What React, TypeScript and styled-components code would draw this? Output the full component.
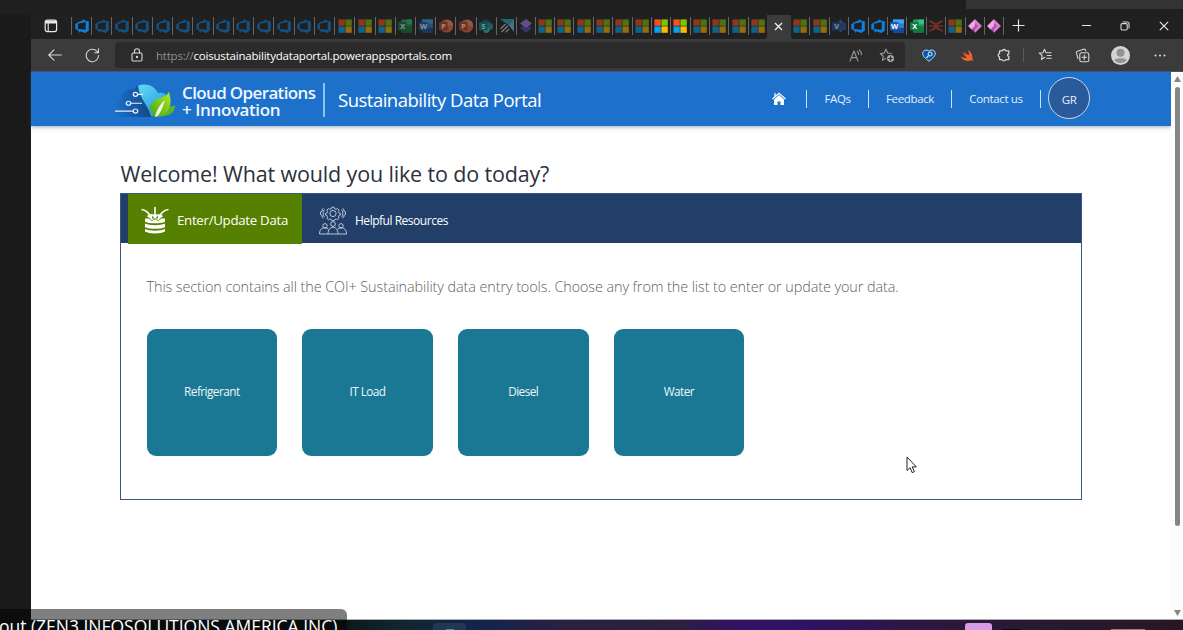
import React from "react";
import styled, { createGlobalStyle, css } from "styled-components";

const Global = createGlobalStyle`
  * { box-sizing: border-box; }
  body { margin: 0; background: #1a1a1a; overflow: hidden; }
  svg { display: block; flex: none; }
`;

const sans = `"Open Sans", "Noto Sans", sans-serif`;

const Screen = styled.div`
  position: relative;
  width: 1183px;
  height: 630px;
  overflow: hidden;
  display: flex;
  flex-direction: column;
  background: #1a1a1a;
  font-family: ${sans};
`;
const TopStrip = styled.div`
  height: 15px;
  flex: none;
  display: flex;
  justify-content: flex-end;
  background: #1f1f1f;
`;
const StripPanel = styled.div`
  width: 217px;
  height: 9px;
  background: #333333;
`;
const Middle = styled.div`
  height: 605px;
  flex: none;
  display: flex;
`;
const SideGutter = styled.div`
  width: 31px;
  flex: none;
  background: #1a1a1a;
`;
const Browser = styled.div`
  flex: 1;
  min-width: 0;
  display: flex;
  flex-direction: column;
`;

const TabBar = styled.div`
  height: 24px;
  flex: none;
  display: flex;
  background: #3b3b3b;
`;
const TabGroup = styled.div<{ $grow?: boolean; $w?: number }>`
  display: flex;
  background: #202020;
  ${(p) => (p.$grow ? "flex: 1;" : `width: ${p.$w}px; flex: none;`)}
  border-radius: ${(p) => (p.$grow ? "0 0 0 3px" : "0 0 3px 0")};
`;
const TabMenu = styled.div`
  width: 40px;
  flex: none;
  display: flex;
  align-items: center;
  justify-content: center;
  padding-bottom: 2px;
`;
const Tab = styled.div<{ $w: number; $side: "left" | "right" }>`
  width: ${(p) => p.$w}px;
  flex: none;
  height: 18px;
  margin-top: 2px;
  display: flex;
  align-items: center;
  justify-content: center;
  border-${(p) => p.$side}: 1px solid #666;
`;
const Dim = styled.div<{ $on?: boolean }>`
  opacity: ${(p) => (p.$on ? 1 : 0.5)};
`;
const ActiveTab = styled.div`
  width: 24px;
  flex: none;
  display: flex;
  align-items: center;
  justify-content: center;
  padding-right: 2px;
  padding-bottom: 2px;
`;
const NewTab = styled.div`
  width: 29px;
  display: flex;
  align-items: center;
  justify-content: center;
  padding-bottom: 3px;
`;
const WindowButtons = styled.div`
  margin-left: auto;
  display: flex;
  padding-bottom: 3px;
`;
const WindowButton = styled.div`
  width: 38.8px;
  display: flex;
  align-items: center;
  justify-content: center;
`;

const Toolbar = styled.div`
  height: 33px;
  flex: none;
  display: flex;
  align-items: center;
  background: #3b3b3b;
  border-bottom: 1px solid #48566a;
`;
const ToolCell = styled.div<{ $w: number }>`
  width: ${(p) => p.$w}px;
  flex: none;
  display: flex;
  align-items: center;
  justify-content: center;
`;
const AddressBar = styled.div`
  width: 790px;
  height: 26px;
  flex: none;
  display: flex;
  align-items: center;
  background: #2b2b2b;
  border-radius: 3px;
`;
const Url = styled.div`
  flex: 1;
  color: #8f8f8f;
  font-size: 11.5px;
  letter-spacing: -0.21px;
  white-space: nowrap;
  b { color: #fff; font-weight: 400; }
`;
const ToolDivider = styled.div`
  width: 1px;
  height: 14px;
  background: #5c5c5c;
`;

const Viewport = styled.div`
  flex: 1;
  min-height: 0;
  display: flex;
  background: #fff;
  border-bottom: 1px solid #a9adb0;
`;
const Page = styled.div`
  width: 1140px;
  flex: none;
`;
const Scrollbar = styled.div`
  flex: 1;
  display: flex;
  flex-direction: column;
  align-items: center;
  justify-content: space-between;
  padding: 4px 0 3px 1px;
  background: #fcfcfc;
`;
const Thumb = styled.div`
  width: 5px;
  height: 439px;
  margin: 5px 0 auto;
  border-radius: 3px;
  background: #858585;
`;

const Header = styled.header`
  height: 54px;
  display: flex;
  align-items: center;
  padding: 0 81px 0 84px;
  background: #1d71cb;
  box-shadow: 0 1px 4px rgba(40, 80, 130, 0.5);
`;
const Brand = styled.div`
  width: 141px;
  margin-left: 7px;
  color: #eef6ff;
  font-size: 17px;
  font-weight: 600;
  line-height: 17px;
  letter-spacing: -0.64px;
  white-space: nowrap;
  padding-top: 4px;
`;
const BrandLine = styled.div<{ $ls?: number }>`
  height: 17px;
  letter-spacing: ${(p) => p.$ls ?? -0.64}px;
`;
const BrandRule = styled.div`
  width: 2px;
  height: 34px;
  margin: 2px 13px 0 0;
  background: #8fc0ef;
`;
const PortalTitle = styled.div`
  color: #fff;
  font-size: 18.5px;
  letter-spacing: -0.5px;
  white-space: nowrap;
`;
const Nav = styled.nav`
  margin-left: auto;
  display: flex;
  align-items: center;
`;
const NavItem = styled.div<{ $w: number }>`
  width: ${(p) => p.$w}px;
  display: flex;
  justify-content: center;
  color: #e4effb;
  font-size: 11.5px;
  letter-spacing: -0.35px;
  white-space: nowrap;
  padding-bottom: 1px;
`;
const NavRule = styled.div`
  width: 1px;
  height: 18px;
  margin-bottom: 1px;
  background: #cfe2f6;
`;
const Avatar = styled.div`
  width: 42px;
  height: 42px;
  margin-left: 7px;
  margin-bottom: 2px;
  border: 1px solid #c6d8f0;
  border-radius: 50%;
  background: #2b5a9b;
  color: #e8effa;
  font-size: 11.5px;
  letter-spacing: -0.5px;
  display: flex;
  align-items: center;
  justify-content: center;
  padding-top: 3px;
`;

const Content = styled.main`
  padding: 32px 0 0 89px;
`;
const Welcome = styled.h1`
  margin: 0;
  height: 35px;
  line-height: 31px;
  color: #2b323c;
  font-size: 21.5px;
  font-weight: 400;
  letter-spacing: -0.15px;
  white-space: nowrap;
  padding-left: 0.5px;
`;
const Panel = styled.section`
  width: 962px;
  height: 307px;
  border: 1px solid #3c5680;
`;
const PanelTabs = styled.div`
  height: 49px;
  display: flex;
  padding-left: 7px;
  background: #223f69;
`;
const PanelTab = styled.div<{ $active?: boolean }>`
  display: flex;
  align-items: center;
  color: #fff;
  white-space: nowrap;
  ${(p) =>
    p.$active
      ? css`
          width: 174px;
          height: 50px;
          padding: 2px 0 0 13px;
          gap: 8px;
          background: #568000;
          font-size: 13.3px;
          letter-spacing: -0.31px;
        `
      : css`
          padding: 4px 0 0 17px;
          gap: 8px;
          font-size: 12px;
          letter-spacing: -0.48px;
        `}
`;
const Intro = styled.p`
  margin: 33px 0 0 25.500px;
  height: 22px;
  line-height: 22px;
  color: #5c5f63;
  font-size: 14.4px;
  font-weight: 300;
  letter-spacing: -0.08px;
  white-space: nowrap;
`;
const Cards = styled.div`
  display: flex;
  gap: 25px;
  margin: 31px 0 0 25.500px;
`;
const Card = styled.div`
  width: 130.7px;
  height: 127px;
  border-radius: 9px;
  background: #1b7895;
  color: #eef7fa;
  font-size: 11.8px;
  letter-spacing: -0.55px;
  display: flex;
  align-items: center;
  justify-content: center;
  padding-bottom: 3px;
`;

const Taskbar = styled.div`
  height: 10px;
  flex: none;
  display: flex;
  align-items: flex-end;
  overflow: hidden;
  background: linear-gradient(90deg, #0d191c 0, #0d191c 347px, #11262f 400px, #12244b 475px, #2a2042 560px, #2c1f40 680px, #341166 740px, #2f1266 800px, #2d1740 920px, #28192f 1050px, #281722 1183px);
`;
const TaskButton = styled.div<{ $pink?: boolean }>`
  width: ${(p) => (p.$pink ? 27 : 33)}px;
  height: 7px;
  margin-left: ${(p) => (p.$pink ? 499 : 433)}px;
  border-radius: 3px 3px 0 0;
  background: ${(p) => (p.$pink ? "#d99ce3" : "#223752")};
  display: flex;
  align-items: flex-end;
  justify-content: center;
`;
const TaskMark = styled.i<{ $c: string; $x: number; $w?: number }>`
  width: ${(p) => p.$w ?? 8}px;
  height: 1px;
  flex: none;
  margin-left: ${(p) => p.$x}px;
  background: ${(p) => p.$c};
`;
const Caption = styled.div`
  position: absolute;
  left: 0;
  top: 609px;
  width: 347px;
  height: 21px;
  overflow: hidden;
  border-radius: 0 6px 0 0;
  background: rgba(0, 0, 0, 0.5);
  color: #fff;
  font-size: 17.5px;
  line-height: 22px;
  letter-spacing: -0.02px;
  white-space: nowrap;
  padding-top: 6px;
  text-indent: -1px;
`;
const Pointer = styled.div`
  position: absolute;
  left: 906px;
  top: 456px;
`;

type Kind = "dev" | "ms" | "xl" | "wd" | "pp" | "sp" | "teal" | "stack" | "visio" | "bug" | "apps";

const Letter = ({ c, t, x = 2.9 }: { c: string; t: string; x?: number }) => (
  <>
    <rect x="0" y="3" width="8.6" height="8.6" rx=".8" fill={c} />
    <text x={x - 0.6} y="10" fontSize="7.4" fontWeight="700" fontFamily="Open Sans" fill="#fff">{t}</text>
  </>
);

const glyphs: Record<Kind, React.ReactNode> = {
  dev: (
    <path fillRule="evenodd" fill="#0a80e0" d="M.3 5.200 3 3.200 7.800 1.400V0l3 2.100 3 .1v9.600L10.200 13.900 4.800 12.300v1.600L2 10.600.3 10.200zM2.900 4.700v5.200l7.800.9V3z" />
  ),
  ms: (
    <>
      <rect x=".4" y=".4" width="6.4" height="6.4" fill="#f7501f" />
      <rect x="7.4" y=".4" width="6.4" height="6.4" fill="#7fc400" />
      <rect x=".4" y="7.4" width="6.4" height="6.4" fill="#00a4ef" />
      <rect x="7.4" y="7.4" width="6.4" height="6.4" fill="#ffb900" />
    </>
  ),
  xl: (
    <>
      <rect x="3" y=".5" width="11" height="13" rx="1" fill="#21a366" />
      <path d="M3 7h11v5.5a1 1 0 0 1-1 1H4a1 1 0 0 1-1-1z" fill="#107c41" />
      <rect x="8.5" y=".5" width="5.5" height="4.3" fill="#33c481" />
      <Letter c="#107c41" t="X" />
    </>
  ),
  wd: (
    <>
      <rect x="3" y=".5" width="11" height="13" rx="1" fill="#2b7cd3" />
      <rect x="3" y=".5" width="11" height="4" fill="#41a5ee" />
      <rect x="3" y="9" width="11" height="4.5" fill="#134b9b" />
      <Letter c="#185abd" t="W" x={1.7} />
    </>
  ),
  pp: (
    <>
      <circle cx="7.6" cy="7" r="6.6" fill="#ed6c47" />
      <path d="M7.6 0.4A6.6 6.6 0 0 1 14.2 7H7.6z" fill="#ff8f6b" />
      <Letter c="#c43e1c" t="P" />
    </>
  ),
  sp: (
    <>
      <circle cx="7" cy="4.6" r="4.4" fill="#036c70" />
      <circle cx="10.6" cy="7.6" r="3.6" fill="#1a9ba1" />
      <circle cx="7.4" cy="11" r="3" fill="#37c6d0" />
      <Letter c="#038387" t="S" />
    </>
  ),
  teal: (
    <>
      <path d="M0 0h14L8.5 6z" fill="#2fa8bd" />
      <path d="M14 0v13L8.5 6z" fill="#5fcbe0" />
      <path d="M.5 10 5.5 5M1.5 13 8 6.8M5.5 13.4 9 10" stroke="#d5d5d5" strokeWidth="1.2" />
    </>
  ),
  stack: (
    <>
      <path d="M7 4.5 13 9l-6 5-6-5z" fill="#5a3fae" />
      <path d="m7 0 6 4.5L7 9 1 4.5z" fill="#9a82e8" />
    </>
  ),
  visio: (
    <>
      <path d="m8.5.4 5.5 6.6-5.5 6.6L3 7z" fill="#3f70c8" />
      <rect x="7" y="4" width="7" height="7" fill="#2456a8" />
      <Letter c="#1d4a96" t="V" />
    </>
  ),
  bug: (
    <path d="M0 1.500C2 3.500 4.500 4.800 7 4.800S12 3.500 14 1.500M.5 7h13M0 12.500C2 10.500 4.500 9.200 7 9.200s5 1.300 7 3.300M3.500 2.500l7 9M10.500 2.500l-7 9" stroke="#cc4422" strokeWidth="1.6" fill="none" />
  ),
  apps: (
    <>
      <path d="m7 .2 6.8 6.8L7 13.8.2 7z" fill="#b04aa8" />
      <path d="M7 .2 13.8 7 7 13.8V10L10 7 7 4z" fill="#d77fce" />
      <path d="M3.600 3.600 7 .2V7L3.600 10.400.2 7z" fill="#f0a6e4" />
    </>
  ),
};

const Glyph = ({ kind }: { kind: Kind }) => (
  <svg width="14" height="14" viewBox="0 0 14 14">{glyphs[kind]}</svg>
);

const first: Kind[] = [
  ...Array<Kind>(13).fill("dev"), "ms", "ms", "ms", "xl", "wd", "pp", "pp", "sp", "teal", "stack",
];
const second: Kind[] = Array<Kind>(12).fill("ms");
const third: Kind[] = ["ms", "ms", "visio", "dev", "dev", "wd", "xl", "bug", "ms", "apps", "apps"];
const brightThird = [3, 4, 5, 6, 9, 10];

const line = { fill: "none", stroke: "#d6d6d6", strokeWidth: 1.1, strokeLinecap: "round", strokeLinejoin: "round" } as const;

const Tabs = () => (
  <TabBar>
    <TabGroup $w={736}>
      <TabMenu>
        <svg width="14" height="14" viewBox="0 0 14 14">
          <rect x="1.2" y="1.2" width="11.4" height="11.4" rx="2" fill="none" stroke="#e8e8e8" strokeWidth="1.2" />
          <path d="M1.2 3.2h11.4" stroke="#e8e8e8" strokeWidth="2.6" />
          <path d="M4.2 3.5v9" stroke="#e8e8e8" strokeWidth="1.1" />
        </svg>
      </TabMenu>
      {first.map((k, i) => (
        <Tab key={i} $w={i === 22 ? 18.4 : 20.24} $side="left">
          <Dim $on={i === 0}><Glyph kind={k} /></Dim>
        </Tab>
      ))}
      {second.map((k, i) => (
        <Tab key={i} $w={19.4} $side="left">
          <Dim $on={i === 6 || i === 7}><Glyph kind={k} /></Dim>
        </Tab>
      ))}
    </TabGroup>
    <ActiveTab>
      <svg width="9" height="9" viewBox="0 0 9 9"><path d="m1 1 7 7M8 1 1 8" stroke="#f0f0f0" strokeWidth="1.3" /></svg>
    </ActiveTab>
    <TabGroup $grow>
      {third.map((k, i) => (
        <Tab key={i} $w={19.4} $side="right">
          <Dim $on={brightThird.includes(i)}><Glyph kind={k} /></Dim>
        </Tab>
      ))}
      <NewTab>
        <svg width="13" height="13" viewBox="0 0 13 13"><path d="M6.5.5v12M.5 6.500h12" stroke="#e4e4e4" strokeWidth="1.2" /></svg>
      </NewTab>
      <WindowButtons>
        <WindowButton>
          <svg width="9" height="9" viewBox="0 0 9 9"><path d="M0 4.5h9" stroke="#e4e4e4" /></svg>
        </WindowButton>
        <WindowButton>
          <svg width="10" height="10" viewBox="0 0 10 10" {...line}>
            <rect x="1" y="2.6" width="6.2" height="6.4" rx="1.2" /><path d="M3 1h4.2A1.8 1.8 0 0 1 9 2.8V7" />
          </svg>
        </WindowButton>
        <WindowButton>
          <svg width="10" height="10" viewBox="0 0 10 10"><path d="m.8.8 8.4 8.4M9.2.8.8 9.2" stroke="#eee" strokeWidth="1.1" /></svg>
        </WindowButton>
      </WindowButtons>
    </TabGroup>
  </TabBar>
);

const Star = "M6.5 1.2 8.1 4.7l3.7.4-2.8 2.6.8 3.8-3.3-1.9-3.3 1.9.8-3.8L1.2 5.1l3.7-.4z";

const Tools = () => (
  <Toolbar>
    <ToolCell $w={47}>
      <svg width="14" height="12" viewBox="0 0 14 12" {...line}><path d="M13.3 6H.8M6 .8.8 6 6 11.2" /></svg>
    </ToolCell>
    <ToolCell $w={28}>
      <svg width="15" height="15" viewBox="0 0 15 15" {...line}><path d="M13.6 7.5a6.2 6.2 0 1 1-1.800-4.400l1.500 1.500M13.500.900v3.900H9.600" /></svg>
    </ToolCell>
    <ToolCell $w={9} />
    <AddressBar>
      <ToolCell $w={3} />
      <ToolCell $w={38}>
        <svg width="12" height="14" viewBox="0 0 12 14" {...line}>
          <rect x="1" y="5" width="10" height="8" rx="1.2" /><path d="M3.5 5V3.300a2.500 2.500 0 0 1 5 0V5" /><circle cx="6" cy="9" r=".6" fill="#eee" />
        </svg>
      </ToolCell>
      <Url>https://<b>coisustainabilitydataportal.powerappsportals.com</b></Url>
      <ToolCell $w={30}>
        <svg width="14" height="13" viewBox="0 0 14 13" {...line} stroke="#989898"><path d="M1 12 5 2l4 10M2.400 8.600h5.200M8.400 2.400a3.600 3.600 0 0 1 1.200 3M10.400.800a6 6 0 0 1 2 4.800" /></svg>
      </ToolCell>
      <ToolCell $w={31}>
        <svg width="16" height="15" viewBox="0 0 15 14" {...line} stroke="#989898">
          <path d={Star} /><circle cx="10.800" cy="9.800" r="3.800" fill="#a8a8a8" stroke="#2b2b2b" /><path d="M10.800 8.200v3.200M9.200 9.800h3.200" stroke="#2b2b2b" />
        </svg>
      </ToolCell>
      <ToolCell $w={3} />
    </AddressBar>
    <ToolCell $w={48}>
      <svg width="14" height="13" viewBox="0 0 14 13">
        <path d="M7 12.2C3.300 9.500.700 7.200.700 4.200.700 1.500 4.700-.300 7 2.300 9.300-.300 13.300 1.500 13.300 4.200c0 3-2.600 5.300-6.300 8z" fill="#0b56a4" stroke="#b5def7" strokeWidth="1" />
        <circle cx="8.100" cy="5" r="2" fill="none" stroke="#d8f0ff" /><path d="M6.600 6.600 4.500 8.800" stroke="#d8f0ff" strokeWidth="1.2" />
      </svg>
    </ToolCell>
    <ToolCell $w={28}>
      <svg width="14" height="13" viewBox="0 0 14 13"><path d="M.4 7.500C4 9.400 6.300 9 7 8.500 4.600 6.800 2.600 4.200 2.200 3.200c2.500 2.200 4 3 4.200 3C5.200 5 4 3.200 3.800 2.400c2.300 2.300 4.500 3.800 5 3.900C9.400 4.500 8.700 2 7.400.600c4 2.400 5.400 5.800 4.800 8.400 1.300 1.600 1 2.800 1 3.200-1-1.300-2-1-2.700-.700C6.700 13 2.600 11.200.4 7.500z" fill="#f0632c" /></svg>
    </ToolCell>
    <ToolCell $w={4} />
    <ToolCell $w={38}>
      <svg width="14" height="14" viewBox="0 0 14 14" {...line} strokeWidth={1.3}><path d="M2.500 2.800h2.700a1.900 1.900 0 0 1 3.600 0h3v3a1.300 1.300 0 0 0 0 2.600v3.200h-3a1.900 1.900 0 0 1-3.600 0H2.500V9a1.900 1.900 0 0 1 0-3.600z" /></svg>
    </ToolCell>
    <ToolDivider />
    <ToolCell $w={41}>
      <svg width="14" height="14" viewBox="0 0 14 14" {...line}><path d="M6.800 9.300 3.400 11.500l.800-3.800L1.200 5.100l3.700-.400 1.600-3.500 1.600 3.500h5M9.200 7.500h4M8.800 10.300h4.400" /></svg>
    </ToolCell>
    <ToolCell $w={35}>
      <svg width="15" height="15" viewBox="0 0 15 15" {...line}><rect x="4.800" y="4.800" width="9" height="9" rx="1.800" /><path d="M9.300 7v4.600M7 9.300h4.600M3 10.500 1.500 5.200A1.500 1.500 0 0 1 2.500 3.300L8.600 1.200a1.500 1.500 0 0 1 1.900 1l.300.800" /></svg>
    </ToolCell>
    <ToolCell $w={41}>
      <svg width="19" height="19" viewBox="0 0 19 19"><circle cx="9.500" cy="9.500" r="9.500" fill="#d4d4d4" /><circle cx="9.500" cy="6.800" r="4" fill="#929292" /><path d="M3.500 14c0-2.300 12-2.300 12 0-1.500 4-10.500 4-12 0z" fill="#929292" /></svg>
    </ToolCell>
    <ToolCell $w={37}>
      <svg width="12" height="3" viewBox="0 0 12 3" fill="#e0e0e0"><circle cx="1.500" cy="1.500" r="1" /><circle cx="6" cy="1.500" r="1" /><circle cx="10.500" cy="1.500" r="1" /></svg>
    </ToolCell>
  </Toolbar>
);

const LogoSlot = styled.div`
  padding-top: 2px;
`;
const Logo = () => (
  <svg width="60" height="33" viewBox="0 0 60 36" preserveAspectRatio="none">
    <defs>
      <linearGradient id="cloudDark" x1="0" x2="1"><stop offset="0" stopColor="#1a6fc8" /><stop offset=".5" stopColor="#175ba8" /><stop offset="1" stopColor="#174781" /></linearGradient>
      <linearGradient id="cloudLight" x1="0" x2=".6" y2="1"><stop offset="0" stopColor="#62d8f6" /><stop offset="1" stopColor="#249ddd" /></linearGradient>
      <linearGradient id="leaf" x1="1" x2="0" y2="1"><stop offset="0" stopColor="#b2ea20" /><stop offset="1" stopColor="#43a51c" /></linearGradient>
    </defs>
    <path d="M36 36H9C3 36 0 31 1 25c1-5 4-7 5-8C6 9 12 5 19 6c2-4 4-5 7-5z" fill="url(#cloudDark)" />
    <path d="M23 2c8-4 17 0 20 8 6-2 11 3 11 10 0 8-5 15-12 15H36C34 25 24 15 23 2z" fill="url(#cloudLight)" />
    <g fill="none" stroke="#e0f2fc" strokeWidth="1.300"><path d="M0 29.500h18M16 21h11M23 11.300h5" /><circle cx="20.500" cy="29.500" r="2.200" /><circle cx="13.500" cy="21" r="2.200" /><circle cx="20.500" cy="11.300" r="2.200" /></g>
    <path d="M43 35.500c0-8 7-10 17-12 0 8-5 12-17 12z" fill="#54b526" />
    <path d="M39 35.500c-6-8-5-15 3-19 5-2 10-3 12-8 4 14 0 24-9 27z" fill="url(#leaf)" />
    <path d="M40 35.500c2-8 5-13 10-18-2 7-4 14-8 18z" fill="#effbd9" />
  </svg>
);

const DataIcon = () => (
  <svg width="28" height="28" viewBox="0 0 28 28">
    <g fill="#fff">
      <path d="M4 12.500h20v3.200c-5 2.200-15 2.200-20 0zM4 17.500c5 2.200 15 2.200 20 0v3.700c-5 2.200-15 2.200-20 0zM4 23c5 2.200 15 2.200 20 0v2.600c-4 2.600-16 2.600-20 0z" />
      <path d="M10.500 8.500 17.500 8.500 14 13zM5.500 10l6-2.500-.5 6zM22.500 10l-6-2.500.5 6z" />
    </g>
    <g fill="none" stroke="#fff" strokeWidth="1.600"><path d="M14 1v8M.5 3.500c4 .5 6.500 2.500 8.500 6M27.500 3.500c-4 .5-6.500 2.500-8.500 6" /></g>
    <path d="M8 12.500l2.800 2.200L14 12.800l3.200 1.900 2.800-2.200" fill="none" stroke="#568000" strokeWidth=".8" />
  </svg>
);

const PeopleIcon = () => (
  <svg width="28" height="29" viewBox="0 0 28 29" fill="none" stroke="#dce3ee" strokeWidth=".8">
    <circle cx="14" cy="7.500" r="3.100" />
    <path d="m12.800 1.200 2.400 0 .4 1.500 1.600.6 1.400-.8 1.500 1.600-.7 1.400.6 1.500 1.500.4v1.500l-1.500.5-.6 1.400.7 1.400-1.600 1.500-1.300-.7-1.600.6-.4 1.100h-2.400l-.4-1.100-1.600-.6-1.300.7-1.600-1.500.7-1.400-.6-1.400-1.500-.5V7.400L8 7l.6-1.500-.7-1.400 1.500-1.600 1.400.8 1.600-.6z" />
    <path d="M4.500 2.500 3 3.500l.2 1.700L1.500 6v2.500l1.600.8L3 11l1.500 1M5.500 3.500c-1.800 2-1.800 5.500 0 7.500M23.500 2.500l1.500 1-.2 1.700 1.700.8v2.500l-1.600.8.1 1.700-1.500 1M22.500 3.500c1.800 2 1.800 5.500 0 7.500" />
    <circle cx="14" cy="18" r="2.400" /><circle cx="6" cy="19.800" r="2.200" /><circle cx="22" cy="19.800" r="2.200" />
    <path d="M9 28c0-9 10-9 10 0M.5 28c0-6 4.500-7.500 8.900-5M27.500 28c0-6-4.500-7.500-8.900-5M.5 28h27" />
  </svg>
);

export default function App() {
  return (
    <>
      <Global />
      <Screen>
        <TopStrip><StripPanel /></TopStrip>
        <Middle>
          <SideGutter />
          <Browser>
            <Tabs />
            <Tools />
            <Viewport>
              <Page>
                <Header>
                  <LogoSlot><Logo /></LogoSlot>
                  <Brand>
                    <BrandLine>Cloud Operations</BrandLine>
                    <BrandLine $ls={-0.4}>+ Innovation</BrandLine>
                  </Brand>
                  <BrandRule />
                  <PortalTitle>Sustainability Data Portal</PortalTitle>
                  <Nav>
                    <NavItem $w={54}>
                      <svg width="14" height="13" viewBox="0 0 14 13"><path d="M7 3 12 7.500V13H8.500V9.500h-3V13H2V7.500z" fill="#fff" /><path d="M.5 7 7 1.200 13.500 7M3 4.500V1" fill="none" stroke="#fff" strokeWidth="1.200" /></svg>
                    </NavItem>
                    <NavRule />
                    <NavItem $w={61}>FAQs</NavItem>
                    <NavRule />
                    <NavItem $w={82}>Feedback</NavItem>
                    <NavRule />
                    <NavItem $w={88}>Contact us</NavItem>
                    <NavRule />
                    <Avatar>GR</Avatar>
                  </Nav>
                </Header>
                <Content>
                  <Welcome>Welcome! What would you like to do today?</Welcome>
                  <Panel>
                    <PanelTabs>
                      <PanelTab $active><DataIcon />Enter/Update Data</PanelTab>
                      <PanelTab><PeopleIcon />Helpful Resources</PanelTab>
                    </PanelTabs>
                    <Intro>This section contains all the COI+ Sustainability data entry tools. Choose any from the list to enter or update your data.</Intro>
                    <Cards>
                      {["Refrigerant", "IT Load", "Diesel", "Water"].map((name) => <Card key={name}>{name}</Card>)}
                    </Cards>
                  </Panel>
                </Content>
              </Page>
              <Scrollbar>
                <svg width="7" height="6" viewBox="0 0 7 6"><path d="M3.500 0 7 6H0z" fill="#858585" /></svg>
                <Thumb />
                <svg width="7" height="6" viewBox="0 0 7 6"><path d="M3.500 6 0 0h7z" fill="#858585" /></svg>
              </Scrollbar>
            </Viewport>
          </Browser>
        </Middle>
        <Taskbar>
          <TaskButton><TaskMark $c="#2fa0a8" $x={0} /></TaskButton>
          <TaskButton $pink />
          <TaskMark $c="#0c0610" $x={10} $w={18} />
          <TaskMark $c="#8b7f88" $x={91} $w={34} />
        </Taskbar>
        <Caption>out (ZEN3 INFOSOLUTIONS AMERICA INC)</Caption>
        <Pointer>
          <svg width="11" height="18" viewBox="0 0 11 18"><path d="M1 1v13.500l3.100-2.800 2 4.900 2.200-.9-2-4.800h4z" fill="#fff" stroke="#222" strokeWidth="1" /></svg>
        </Pointer>
      </Screen>
    </>
  );
}
